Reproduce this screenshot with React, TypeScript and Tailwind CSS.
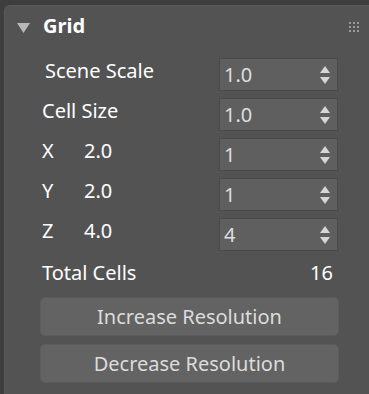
import React from "react";

const font = { fontFamily: '"Noto Sans", "Open Sans", sans-serif' };

function Spinner() {
  return (
    <svg width="12" height="20" viewBox="0 0 12 20" className="shrink-0">
      <polygon points="6,1 11,8 1,8" fill="#d6d6d6" />
      <polygon points="1,12 11,12 6,19" fill="#d6d6d6" />
    </svg>
  );
}

function NumInput({ value }: { value: string }) {
  return (
    <div className="w-[119px] h-[33px] bg-[#5f5f5f] border border-[#4a4a4a] flex items-center justify-between pl-[4px] pr-[6px]">
      <span className="text-[20px] text-[#dedede] leading-none">{value}</span>
      <Spinner />
    </div>
  );
}

function Row({ label, value, sub, indent }: { label: string; value: string; sub?: string; indent?: boolean }) {
  return (
    <div className="flex items-center h-[33px]">
      <div className={`w-[177px] flex items-center text-[20px] text-white leading-none pb-[7px] ${indent ? "pl-[3px]" : ""}`}>
        {sub ? (
          <>
            <span className="w-[42px]">{label}</span>
            <span>{sub}</span>
          </>
        ) : (
          <span>{label}</span>
        )}
      </div>
      <NumInput value={value} />
    </div>
  );
}

export default function App() {
  return (
    <div className="w-[369px] h-[394px] bg-[#3e3e3e] pt-[5px] pl-[4px] overflow-hidden" style={font}>
      <div className="h-[389px] bg-[#535353] rounded-tl-[6px] border-l border-t border-[#5a5a5a]">
        <div className="flex items-center h-[40px] pl-[12px] pr-[10px]">
          <svg width="13" height="10" viewBox="0 0 13 10" className="mt-[3px]">
            <polygon points="0,0 13,0 6.5,10" fill="#b8b8b8" />
          </svg>
          <span className="ml-[13px] text-[20px] font-bold text-white leading-none">Grid</span>
          <div className="ml-auto grid grid-cols-3 gap-[2px] mt-[2px]">
            {Array.from({ length: 9 }).map((_, i) => (
              <div key={i} className="w-[2px] h-[2px] bg-[#9a9a9a]" />
            ))}
          </div>
        </div>
        <div className="pl-[37px] pt-[12px] flex flex-col gap-[7px]">
          <Row label="Scene Scale" value="1.0" indent />
          <Row label="Cell Size" value="1.0" />
          <Row label="X" sub="2.0" value="1" />
          <Row label="Y" sub="2.0" value="1" />
          <Row label="Z" sub="4.0" value="4" />
          <div className="flex items-center justify-between w-[291px] h-[30px] text-[20px] text-white leading-none">
            <span>Total Cells</span>
            <span>16</span>
          </div>
        </div>
        <div className="pl-[35px] pt-[9px] flex flex-col gap-[8px] w-[334px]">
          <button className="h-[39px] rounded-[5px] bg-[#636363] border border-[#5c5c5c] text-[20px] text-[#dcdcdc] leading-none">
            Increase Resolution
          </button>
          <button className="h-[39px] rounded-[5px] bg-[#636363] border border-[#5c5c5c] text-[20px] text-[#dcdcdc] leading-none">
            Decrease Resolution
          </button>
        </div>
      </div>
    </div>
  );
}
